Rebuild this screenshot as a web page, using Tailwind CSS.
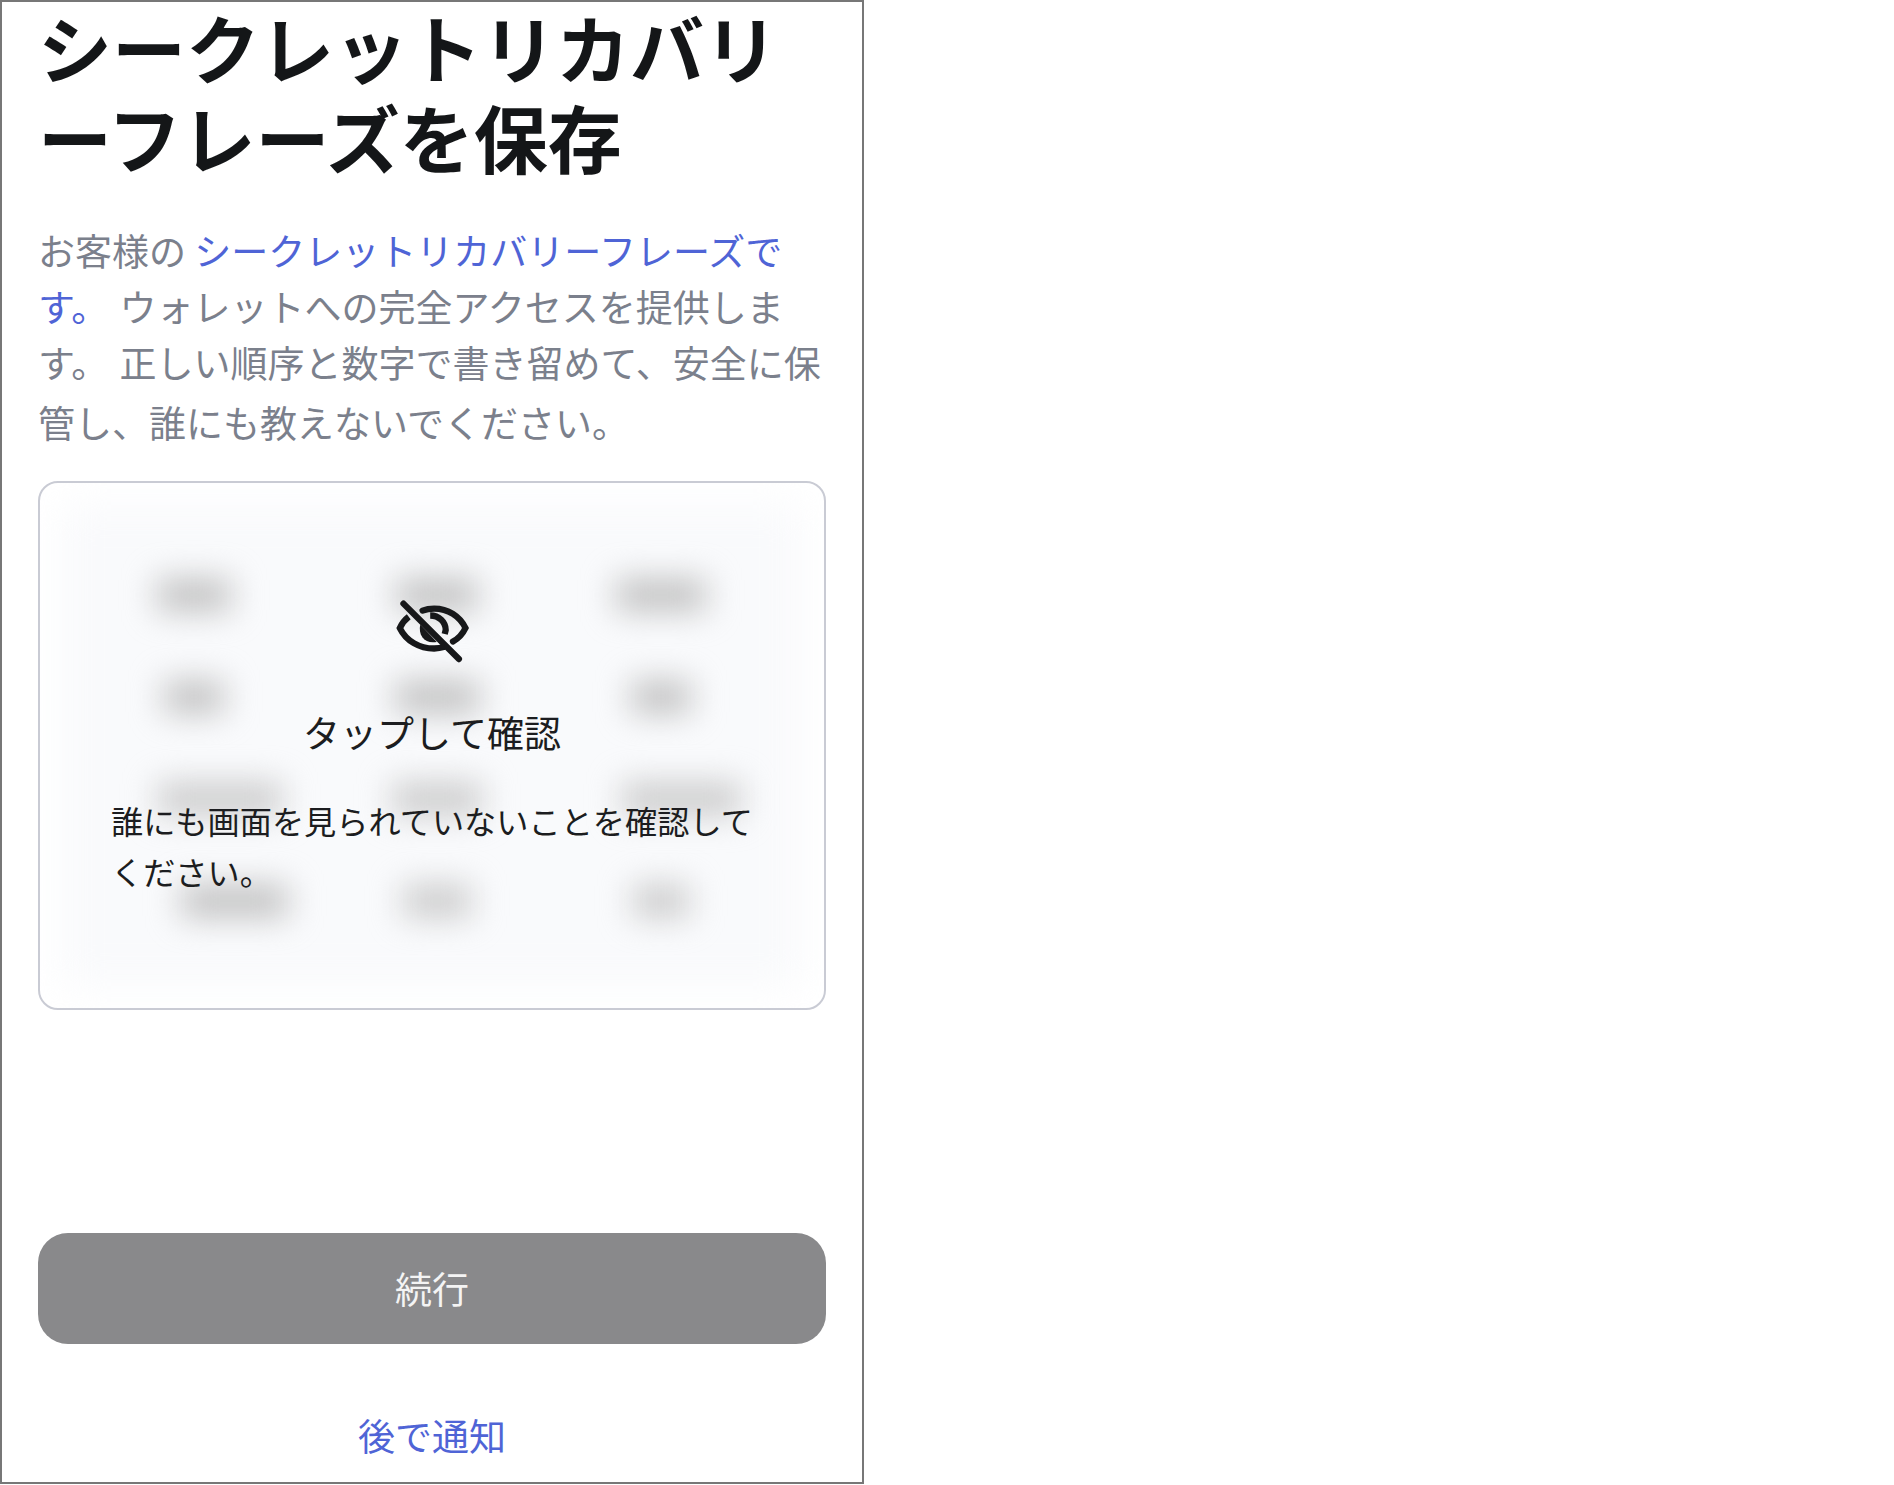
<!DOCTYPE html>
<html lang="ja">
<head>
    <meta charset="UTF-8">
    <title>シークレットリカバリーフレーズを保存</title>
    <script src="https://cdn.jsdelivr.net/npm/@tailwindcss/browser@4"></script>
</head>
<body class="bg-white font-['Noto_Sans_CJK_JP',sans-serif]">
    <div class="w-[864px] h-[1484px] border-2 border-[#777777] bg-white px-[36px] flex flex-col">
        <h1 class="text-[74px] font-bold text-[#141618] whitespace-nowrap">
            <span class="block leading-[88px]">シークレットリカバリ</span>
            <span class="block leading-[92px]">ーフレーズを保存</span>
        </h1>
        <p class="mt-[40px] text-[37px] leading-[56px] text-[#7b808c] whitespace-nowrap">お客様の <span class="text-[#4f64d6]">シークレットリカバリーフレーズで<br>す。</span> <span class="ml-[3px]">ウォレットへの完全アクセスを提供しま</span><br>す。 <span class="ml-[3px]">正しい順序と数字で書き留めて、安全に保</span><span class="block mt-[4px]">管し、誰にも教えないでください。</span></p>

        <div class="relative mt-[31px] h-[529px] shrink-0 border-2 border-[#c9cbd4] rounded-[20px] overflow-hidden bg-white">
            <div class="absolute inset-[22px] bg-[#f9fafc] blur-[20px]"></div>
            <div class="relative grid grid-cols-[246px_240px_208px] ml-[31px] pt-[96px] gap-y-[70px] justify-items-center">
                <div class="w-[74px] h-[32px] bg-[#c0c0c0] blur-[16px]"></div>
                <div class="w-[82px] h-[32px] bg-[#c0c0c0] blur-[16px]"></div>
                <div class="w-[90px] h-[32px] bg-[#c0c0c0] blur-[16px]"></div>
                <div class="w-[60px] h-[32px] bg-[#c0c0c0] blur-[16px]"></div>
                <div class="w-[85px] h-[32px] bg-[#c0c0c0] blur-[16px]"></div>
                <div class="w-[60px] h-[32px] bg-[#c0c0c0] blur-[16px]"></div>
                <div class="w-[124px] h-[32px] translate-x-[26px] bg-[#cacaca] blur-[16px]"></div>
                <div class="w-[90px] h-[32px] bg-[#cacaca] blur-[16px]"></div>
                <div class="w-[119px] h-[32px] translate-x-[20px] bg-[#cacaca] blur-[16px]"></div>
                <div class="w-[107px] h-[32px] translate-x-[40px] bg-[#c0c0c0] blur-[16px]"></div>
                <div class="w-[68px] h-[32px] bg-[#cacaca] blur-[16px]"></div>
                <div class="w-[56px] h-[32px] bg-[#cacaca] blur-[16px]"></div>
            </div>
            <div class="absolute inset-0 flex flex-col items-center pt-[115px] text-[#1c1d20]">
                <svg class="w-[73px] h-[66px] shrink-0" viewBox="75 55 220 200" fill="none" stroke="#17181a" stroke-width="19">
                    <path d="M97 72 L265 240" stroke-linecap="round"/>
                    <path d="M113 112 C100 122 92 133 86 146 C105 185 145 208 190 208 C200 208 212 206 222 203"/>
                    <path d="M155 93 C165 89 178 87 190 87 C232 87 268 110 285 146 C277 163 265 177 247 187" stroke-linecap="round"/>
                    <path d="M178 108 C205 108 225 128 225 152 L222 164"/>
                    <path d="M148 135 L198 188 C165 196 140 170 148 135 Z" fill="#17181a" stroke="none"/>
                </svg>
                <div class="mt-[43px] text-[37px] leading-[50px]">タップして確認</div>
                <p class="mt-[38px] self-stretch pl-[71px] pr-[55px] text-[32.2px] leading-[51px]">誰にも画面を見られていないことを確認してください。</p>
            </div>
        </div>

        <button class="mt-[223px] h-[111px] shrink-0 rounded-[30px] bg-[#89898b] text-[37px] text-[#f4f4f4]">続行</button>
        <div class="mt-[66px] text-center text-[37px] leading-[50px] text-[#4f64d6]">後で通知</div>
    </div>
</body>
</html>
